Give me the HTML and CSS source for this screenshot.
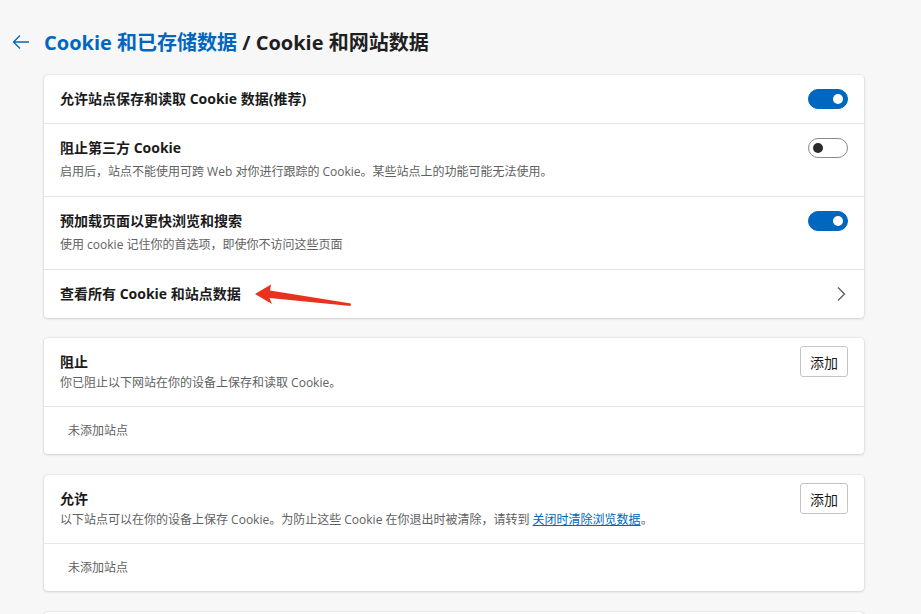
FILE: index.html
```html
<!DOCTYPE html>
<html lang="zh-CN">
<head>
    <meta charset="UTF-8">
    <meta name="viewport" content="width=device-width, initial-scale=1.0">
    <title>Cookie 和网站数据</title>
    <link rel="stylesheet" href="styles.css">
</head>
<body>
    <div class="page">
        <div class="header">
            <a href="#" class="back-button" aria-label="返回">
                <svg width="20" height="20" viewBox="0 0 20 20">
                    <path d="M18 10H3M9 3.5L2.5 10L9 16.5" fill="none" stroke="#0067c0" stroke-width="1.3"/>
                </svg>
            </a>
            <h1><a href="#" class="crumb">Cookie 和已存储数据</a> / Cookie 和网站数据</h1>
        </div>

        <!-- 常规设置 -->
        <div class="card">
            <div class="row row-single">
                <div class="row-text">
                    <div class="row-title">允许站点保存和读取 Cookie 数据(推荐)</div>
                </div>
                <span class="toggle on"></span>
            </div>
            <div class="row row-double">
                <div class="row-text">
                    <div class="row-title">阻止第三方 Cookie</div>
                    <div class="row-desc">启用后，站点不能使用可跨 Web 对你进行跟踪的 Cookie。某些站点上的功能可能无法使用。</div>
                </div>
                <span class="toggle"></span>
            </div>
            <div class="row row-double">
                <div class="row-text">
                    <div class="row-title">预加载页面以更快浏览和搜索</div>
                    <div class="row-desc">使用 cookie 记住你的首选项，即使你不访问这些页面</div>
                </div>
                <span class="toggle on"></span>
            </div>
            <div class="row row-single">
                <div class="row-text">
                    <div class="row-title">查看所有 Cookie 和站点数据</div>
                </div>
                <svg class="chevron" width="10" height="16" viewBox="0 0 10 16">
                    <path d="M2 1.5L8.5 8L2 14.5" fill="none" stroke="#555" stroke-width="1.2"/>
                </svg>
            </div>
        </div>

        <!-- 阻止列表 -->
        <div class="card list-card">
            <div class="list-head">
                <div>
                    <div class="row-title">阻止</div>
                    <div class="row-desc">你已阻止以下网站在你的设备上保存和读取 Cookie。</div>
                </div>
                <button class="add-button">添加</button>
            </div>
            <div class="empty">未添加站点</div>
        </div>

        <!-- 允许列表 -->
        <div class="card list-card">
            <div class="list-head">
                <div>
                    <div class="row-title">允许</div>
                    <div class="row-desc">以下站点可以在你的设备上保存 Cookie。为防止这些 Cookie 在你退出时被清除，请转到 <a href="#" class="link">关闭时清除浏览数据</a>。</div>
                </div>
                <button class="add-button">添加</button>
            </div>
            <div class="empty">未添加站点</div>
        </div>

        <div class="card card-cut"></div>
    </div>

    <!-- 红色标注箭头 -->
    <svg class="mark-arrow" width="110" height="30" viewBox="250 280 110 30">
        <polygon points="255,294 271,284.5 270,290.5 351,303.5 350.5,306 269.5,298 272,304" fill="#e8321e"/>
    </svg>
</body>
</html>
```

FILE: styles.css
```css
:root {
    --bg-color: #f7f7f7;
    --card-color: #ffffff;
    --text-color: #1b1b1b;
    --desc-color: #616161;
    --accent-color: #0067c0;
    --line-color: #e6e6e6;
}

html, body {
    height: 100%;
    overflow: hidden;
}

body {
    margin: 0;
    background: var(--bg-color);
    color: var(--text-color);
    font-family: "Open Sans", "Noto Sans CJK SC", sans-serif;
    position: relative;
}

.page {
    width: 820px;
    padding: 26px 0 0 44px;
}

.header {
    display: flex;
    align-items: center;
    height: 30px;
    margin-bottom: 19px;
    position: relative;
}

.back-button {
    position: absolute;
    left: -33px;
    top: 6px;
    display: flex;
}

h1 {
    margin: 0;
    font-size: 20px;
    font-weight: 700;
    color: #1f1f1f;
}

.crumb {
    color: var(--accent-color);
    text-decoration: none;
}

.card {
    background: var(--card-color);
    border-radius: 4px;
    box-shadow: 0 0 2px rgba(0,0,0,0.14), 0 1px 3px rgba(0,0,0,0.12);
    margin-bottom: 20px;
}

.list-card {
    margin-bottom: 21px;
}

.card-cut {
    height: 40px;
}

.row {
    display: flex;
    align-items: center;
    justify-content: space-between;
    padding: 0 16px;
    border-bottom: 1px solid var(--line-color);
}

.row:last-child {
    border-bottom: none;
}

.row-single {
    height: 48px;
}

.row-double {
    height: 72px;
    align-items: flex-start;
}

.row-double .row-text {
    padding-top: 14px;
}

.row-double .toggle {
    margin-top: 14px;
}

.row-title {
    font-size: 14px;
    font-weight: 700;
    line-height: 20px;
}

.row-desc {
    font-size: 12px;
    line-height: 18px;
    color: var(--desc-color);
    margin-top: 5px;
}

.toggle {
    width: 40px;
    height: 20px;
    box-sizing: border-box;
    border-radius: 10px;
    border: 1px solid #8a8a8a;
    background: #fff;
    position: relative;
    flex-shrink: 0;
}

.toggle::after {
    content: "";
    position: absolute;
    top: 4px;
    left: 4px;
    width: 10px;
    height: 10px;
    border-radius: 50%;
    background: #2b2b2b;
}

.toggle.on {
    background: var(--accent-color);
    border-color: var(--accent-color);
}

.toggle.on::after {
    left: 24px;
    background: #fff;
}

.chevron {
    margin-right: 2px;
}

.list-head {
    display: flex;
    justify-content: space-between;
    align-items: flex-start;
    padding: 14px 16px 0;
    height: 54px;
    border-bottom: 1px solid var(--line-color);
}

.list-head .row-desc {
    margin-top: 2px;
}

.add-button {
    margin-top: -6px;
    width: 48px;
    height: 31px;
    background: #fff;
    border: 1px solid #c4c4c4;
    border-radius: 3px;
    font-family: inherit;
    font-size: 14px;
    color: var(--text-color);
    padding: 0;
}

.empty {
    height: 47px;
    line-height: 47px;
    padding-left: 24px;
    font-size: 12px;
    color: var(--desc-color);
}

.link {
    color: var(--accent-color);
    text-decoration: underline;
}

.mark-arrow {
    position: absolute;
    left: 250px;
    top: 280px;
}
```
